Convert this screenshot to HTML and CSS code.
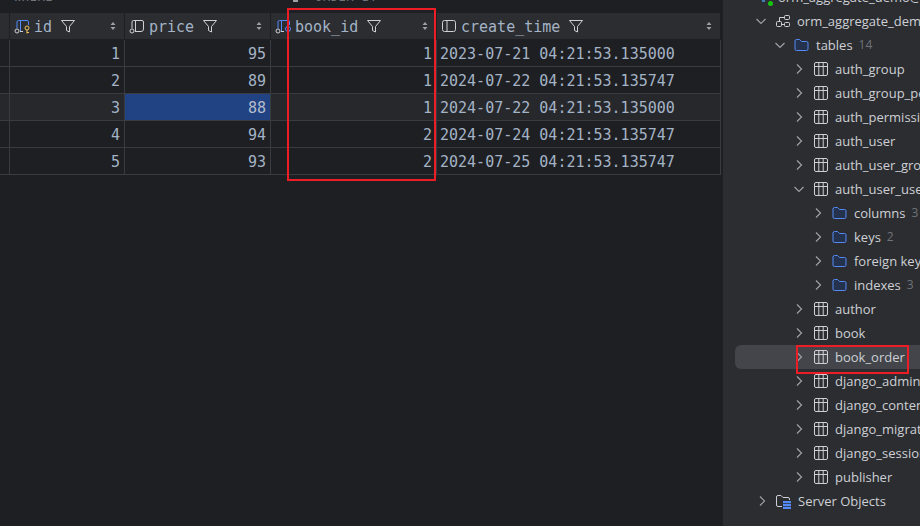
FILE: index.html
```html
<!DOCTYPE html>
<html lang="en">
<head>
<meta charset="utf-8">
<title>Database console</title>
<link rel="stylesheet" href="styles.css">
</head>
<body>
<svg class="defs" width="0" height="0">
  <symbol id="i-right" viewBox="0 0 16 16"><path d="M6 3.5 10.5 8 6 12.5" fill="none" stroke="#9da0a8" stroke-width="1.2"/></symbol>
  <symbol id="i-down" viewBox="0 0 16 16"><path d="M3.5 6 8 10.5 12.5 6" fill="none" stroke="#9da0a8" stroke-width="1.2"/></symbol>
  <symbol id="i-table" viewBox="0 0 16 16"><g fill="none" stroke="#ced0d6" stroke-width="1"><rect x="2.500" y="1.500" width="13" height="13" rx="1.500"/><path d="M2.500 5.500h13M6.800 1.500v13M11.200 1.500v13"/></g></symbol>
  <symbol id="i-folder" viewBox="0 0 16 16"><path d="M2 4a1.500 1.500 0 0 1 1.500-1.500h3l2 2h5A1.500 1.500 0 0 1 15 6v6a1.500 1.500 0 0 1-1.500 1.500h-10A1.500 1.500 0 0 1 2 12Z" fill="#25324d" stroke="#548af7" stroke-width="1"/></symbol>
  <symbol id="i-schema" viewBox="0 0 16 16"><g fill="none" stroke="#ced0d6" stroke-width="1"><rect x="10.500" y="2.500" width="5" height="4" rx="1"/><rect x="2.500" y="8.500" width="5" height="5" rx="1"/><rect x="10.500" y="9.500" width="5" height="4" rx="1"/><path d="M10.500 4.500H5.500V8.500M7.500 11.500h3"/></g></symbol>
  <symbol id="i-server" viewBox="0 0 16 16"><path d="M7 13.500H3A1.500 1.500 0 0 1 1.500 12V4A1.500 1.500 0 0 1 3 2.500h3L8 4.500h5A1.500 1.500 0 0 1 14.500 6v1" fill="none" stroke="#ced0d6"/><path d="M8 8h8v2.300H8zM8 11h8v2.300H8zM8 14h8v2H8z" fill="#548af7"/></symbol>
  <symbol id="i-funnel" viewBox="0 0 16 16"><path d="M1.500 2.500h13L9.500 8.500v5.500l-3-1.500V8.500Z" fill="none" stroke="#ced0d6" stroke-width="1"/></symbol>
  <symbol id="i-sort" viewBox="0 0 8 12"><path d="M4 2 6.500 5h-5ZM4 10 1.500 7h5Z" fill="#9da0a8"/></symbol>
  <symbol id="i-col" viewBox="0 0 16 16"><g fill="none" stroke="#ced0d6"><rect x="1.500" y="2.500" width="13" height="11" rx="2"/><path d="M6 2.500v11"/></g></symbol>
  <symbol id="i-colmark" viewBox="0 0 16 16"><g fill="none" stroke="#ced0d6"><path d="M3 10.500V4A1.500 1.500 0 0 1 4.500 2.500H13A1.500 1.500 0 0 1 14.500 4v7A2.500 2.500 0 0 1 12 13.500H6"/><path d="M6.500 2.500v11"/><circle cx="3" cy="13" r="2"/></g></symbol>
  <symbol id="i-colkey" viewBox="0 0 16 16"><g fill="none"><path d="M3 10.500V4A1.500 1.500 0 0 1 4.500 2.500H13A1.500 1.500 0 0 1 14.500 4V7" stroke="#548af7"/><path d="M6.500 2.500v11" stroke="#548af7"/><path d="M6 13.500h3" stroke="#ced0d6"/><circle cx="3" cy="13" r="2" stroke="#ced0d6"/><circle cx="13" cy="10" r="2" stroke="#f2c55c"/><path d="M13 12v3.500M13 14.500h2" stroke="#f2c55c"/></g></symbol>
  <symbol id="i-colfk" viewBox="0 0 16 16"><g fill="none"><path d="M3 10.500V4A1.500 1.500 0 0 1 4.500 2.500H13A1.500 1.500 0 0 1 14.500 4V7" stroke="#548af7"/><path d="M6.500 2.500v11" stroke="#548af7"/><path d="M6 13.500h3" stroke="#ced0d6"/><circle cx="3" cy="13" r="2" stroke="#ced0d6"/><circle cx="13" cy="11" r="2.500" stroke="#548af7"/></g></symbol>
</svg>

<main class="app">
  <section class="editor">
    <div class="filters">
      <span class="filter where">WHERE</span>
      <span class="filter-sep"></span>
      <span class="filter">ORDER BY</span>
    </div>
    <div class="grid">
      <div class="gutter head"></div>
      <div class="th"><svg class="th-icon"><use href="#i-colkey"/></svg><span>id</span><svg class="th-funnel"><use href="#i-funnel"/></svg><svg class="th-sort"><use href="#i-sort"/></svg></div>
      <div class="th"><svg class="th-icon"><use href="#i-colmark"/></svg><span>price</span><svg class="th-funnel"><use href="#i-funnel"/></svg><svg class="th-sort"><use href="#i-sort"/></svg></div>
      <div class="th"><svg class="th-icon"><use href="#i-colfk"/></svg><span>book_id</span><svg class="th-funnel"><use href="#i-funnel"/></svg><svg class="th-sort"><use href="#i-sort"/></svg></div>
      <div class="th"><svg class="th-icon"><use href="#i-col"/></svg><span>create_time</span><svg class="th-funnel"><use href="#i-funnel"/></svg><svg class="th-sort"><use href="#i-sort"/></svg></div>

      <div class="gutter"></div><div class="td num">1</div><div class="td num">95</div><div class="td num">1</div><div class="td">2023-07-21 04:21:53.135000</div>
      <div class="gutter"></div><div class="td num">2</div><div class="td num">89</div><div class="td num">1</div><div class="td">2024-07-22 04:21:53.135747</div>
      <div class="gutter cur"></div><div class="td num cur">3</div><div class="td num sel">88</div><div class="td num cur">1</div><div class="td cur">2024-07-22 04:21:53.135000</div>
      <div class="gutter"></div><div class="td num">4</div><div class="td num">94</div><div class="td num">2</div><div class="td">2024-07-24 04:21:53.135747</div>
      <div class="gutter"></div><div class="td num">5</div><div class="td num">93</div><div class="td num">2</div><div class="td">2024-07-25 04:21:53.135747</div>
    </div>
    <div class="mark mark-col"></div>
  </section>

  <aside class="tree">
    <div class="node lv1 top"><span class="db-mark"></span><span class="dot"></span><span class="name">orm_aggregate_demo@localhost</span></div>
    <div class="node lv1"><svg class="chev"><use href="#i-down"/></svg><svg class="ico"><use href="#i-schema"/></svg><span class="name">orm_aggregate_demo</span></div>
    <div class="node lv2"><svg class="chev"><use href="#i-down"/></svg><svg class="ico"><use href="#i-folder"/></svg><span class="name">tables</span><span class="count">14</span></div>
    <div class="node lv3"><svg class="chev"><use href="#i-right"/></svg><svg class="ico"><use href="#i-table"/></svg><span class="name">auth_group</span></div>
    <div class="node lv3"><svg class="chev"><use href="#i-right"/></svg><svg class="ico"><use href="#i-table"/></svg><span class="name">auth_group_permissions</span></div>
    <div class="node lv3"><svg class="chev"><use href="#i-right"/></svg><svg class="ico"><use href="#i-table"/></svg><span class="name">auth_permission</span></div>
    <div class="node lv3"><svg class="chev"><use href="#i-right"/></svg><svg class="ico"><use href="#i-table"/></svg><span class="name">auth_user</span></div>
    <div class="node lv3"><svg class="chev"><use href="#i-right"/></svg><svg class="ico"><use href="#i-table"/></svg><span class="name">auth_user_groups</span></div>
    <div class="node lv3"><svg class="chev"><use href="#i-down"/></svg><svg class="ico"><use href="#i-table"/></svg><span class="name">auth_user_user_permissions</span></div>
    <div class="node lv4"><svg class="chev"><use href="#i-right"/></svg><svg class="ico"><use href="#i-folder"/></svg><span class="name">columns</span><span class="count">3</span></div>
    <div class="node lv4"><svg class="chev"><use href="#i-right"/></svg><svg class="ico"><use href="#i-folder"/></svg><span class="name">keys</span><span class="count">2</span></div>
    <div class="node lv4"><svg class="chev"><use href="#i-right"/></svg><svg class="ico"><use href="#i-folder"/></svg><span class="name">foreign keys</span><span class="count">2</span></div>
    <div class="node lv4"><svg class="chev"><use href="#i-right"/></svg><svg class="ico"><use href="#i-folder"/></svg><span class="name">indexes</span><span class="count">3</span></div>
    <div class="node lv3"><svg class="chev"><use href="#i-right"/></svg><svg class="ico"><use href="#i-table"/></svg><span class="name">author</span></div>
    <div class="node lv3"><svg class="chev"><use href="#i-right"/></svg><svg class="ico"><use href="#i-table"/></svg><span class="name">book</span></div>
    <div class="node lv3 active"><svg class="chev"><use href="#i-right"/></svg><svg class="ico"><use href="#i-table"/></svg><span class="name">book_order</span><div class="mark mark-node"></div></div>
    <div class="node lv3"><svg class="chev"><use href="#i-right"/></svg><svg class="ico"><use href="#i-table"/></svg><span class="name">django_admin_log</span></div>
    <div class="node lv3"><svg class="chev"><use href="#i-right"/></svg><svg class="ico"><use href="#i-table"/></svg><span class="name">django_content_type</span></div>
    <div class="node lv3"><svg class="chev"><use href="#i-right"/></svg><svg class="ico"><use href="#i-table"/></svg><span class="name">django_migrations</span></div>
    <div class="node lv3"><svg class="chev"><use href="#i-right"/></svg><svg class="ico"><use href="#i-table"/></svg><span class="name">django_session</span></div>
    <div class="node lv3"><svg class="chev"><use href="#i-right"/></svg><svg class="ico"><use href="#i-table"/></svg><span class="name">publisher</span></div>
    <div class="node lv1b"><svg class="chev"><use href="#i-right"/></svg><svg class="ico"><use href="#i-server"/></svg><span class="name">Server Objects</span></div>
  </aside>
</main>
</body>
</html>
```

FILE: styles.css
```css
* { box-sizing: border-box; }
html, body { margin: 0; height: 100%; overflow: hidden; background: #1e1f22; }
.defs { position: absolute; }
.app { display: flex; align-items: flex-start; width: 920px; height: 526px; overflow: hidden; }

.editor { position: relative; width: 723px; flex: none; padding-right: 2px; font: 15px/1 "DejaVu Sans Mono", monospace; color: #a4b3c6; }
.filters { height: 13px; display: flex; align-items: flex-start; padding-left: 14px; overflow: hidden; font-size: 12px; color: #6f737a; letter-spacing: .6px; line-height: 13px; }
.filter { margin-top: -9px; white-space: nowrap; }
.where { width: 279px; }
.filter-sep { width: 5px; height: 2px; background: #9da0a8; margin: 0 17px 0 0; flex: none; }

.grid { display: grid; grid-template-columns: 10px 115px 146px 166px 284px; grid-template-rows: repeat(6, 27px); }
.th { display: flex; align-items: center; background: #2b2d30; border-right: 1px solid #1e1f22; border-bottom: 1px solid #1e1f22; padding: 2px 0 0 4px; }
.gutter { border-right: 1px solid #393b40; border-bottom: 1px solid #393b40; }
.gutter.head { background: #2b2d30; border-color: #1e1f22; }
.th-icon { width: 16px; height: 16px; flex: none; margin: -2px 4px 0 0; }
.th-funnel { width: 16px; height: 16px; flex: none; margin: -2px 0 0 8px; }
.th-sort { width: 8px; height: 12px; flex: none; margin: -2px 7px 0 auto; }
.td { display: flex; align-items: center; padding: 2px 3px 0; border-right: 1px solid #393b40; border-bottom: 1px solid #393b40; white-space: nowrap; overflow: hidden; }
.num { justify-content: flex-end; padding-right: 4px; }
.cur { background: #26282c; }
.sel { background: #214283; color: #b4bccb; }

.mark { position: absolute; border: 2px solid #ee1c25; pointer-events: none; }
.mark-col { left: 287px; top: 8px; width: 149px; height: 173px; }

.tree { flex: none; width: 197px; height: 541px; margin-top: -15px; background: #2b2d30; font: 13px/24px "Open Sans", "Liberation Sans", sans-serif; color: #ced0d6; overflow: hidden; }
.node { position: relative; display: flex; align-items: center; height: 24px; white-space: nowrap; }
.chev { width: 16px; height: 16px; flex: none; margin-right: 5px; }
.ico { width: 16px; height: 16px; flex: none; margin-right: 7px; }
.name { flex: none; }
.count { flex: none; margin-left: 6px; font-size: 12px; color: #6f737a; }
.lv1 { padding-left: 30px; }
.lv1b { padding-left: 31px; }
.lv2 { padding-left: 49px; }
.lv3 { padding-left: 68px; }
.lv4 { padding-left: 87px; }
.top { padding-left: 55px; }
.db-mark { position: absolute; left: 39px; top: 15px; width: 3px; height: 2px; background: #3f7fb5; }
.dot { position: absolute; left: 45px; top: 16px; width: 5px; height: 5px; border-radius: 50%; background: #16c60c; }
.active::before { content: ""; position: absolute; left: 12px; top: 0; width: 185px; height: 24px; border-radius: 6px 0 0 6px; background: #43454a; }
.active > * { position: relative; }
.active > .mark { position: absolute; left: 73px; top: 0; width: 113px; height: 29px; }
```
